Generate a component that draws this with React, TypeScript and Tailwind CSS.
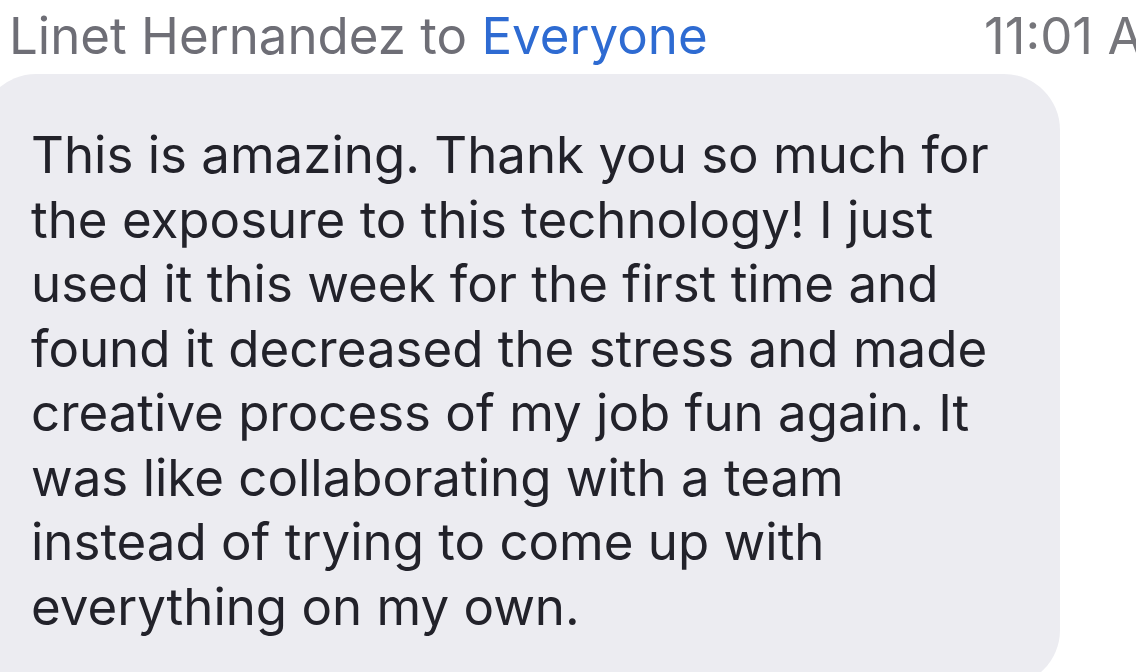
import React from "react";

const lines = [
  "This is amazing. Thank you so much for",
  "the exposure to this technology! I just",
  "used it this week for the first time and",
  "found it decreased the stress and made",
  "creative process of my job fun again. It",
  "was like collaborating with a team",
  "instead of trying to come up with",
  "everything on my own.",
];

export default function App() {
  return (
    <div
      className="w-[1136px] h-[672px] overflow-hidden bg-white"
      style={{ fontFamily: 'Inter, "Liberation Sans", Arial, sans-serif' }}
    >
      <div className="flex items-start h-[74px] pl-[9px] pt-[6px] text-[51px] leading-[60px] text-[#6e6e76]">
        <div className="whitespace-nowrap">
          Linet Hernandez to <span className="text-[#2e6bd2]">Everyone</span>
        </div>
        <div className="ml-auto w-[152px] shrink-0 whitespace-nowrap text-[#76767b]">11:01 AM</div>
      </div>
      <div className="ml-[-20px] w-[1080px] h-[612px] rounded-[56px] bg-[#ececf1] pl-[51px] pt-[49px]">
        <div className="text-[51px] leading-[64.5px] text-[#22222a]">
          {lines.map((l, i) => (
            <div key={i} className="whitespace-nowrap">
              {l}
            </div>
          ))}
        </div>
      </div>
    </div>
  );
}
